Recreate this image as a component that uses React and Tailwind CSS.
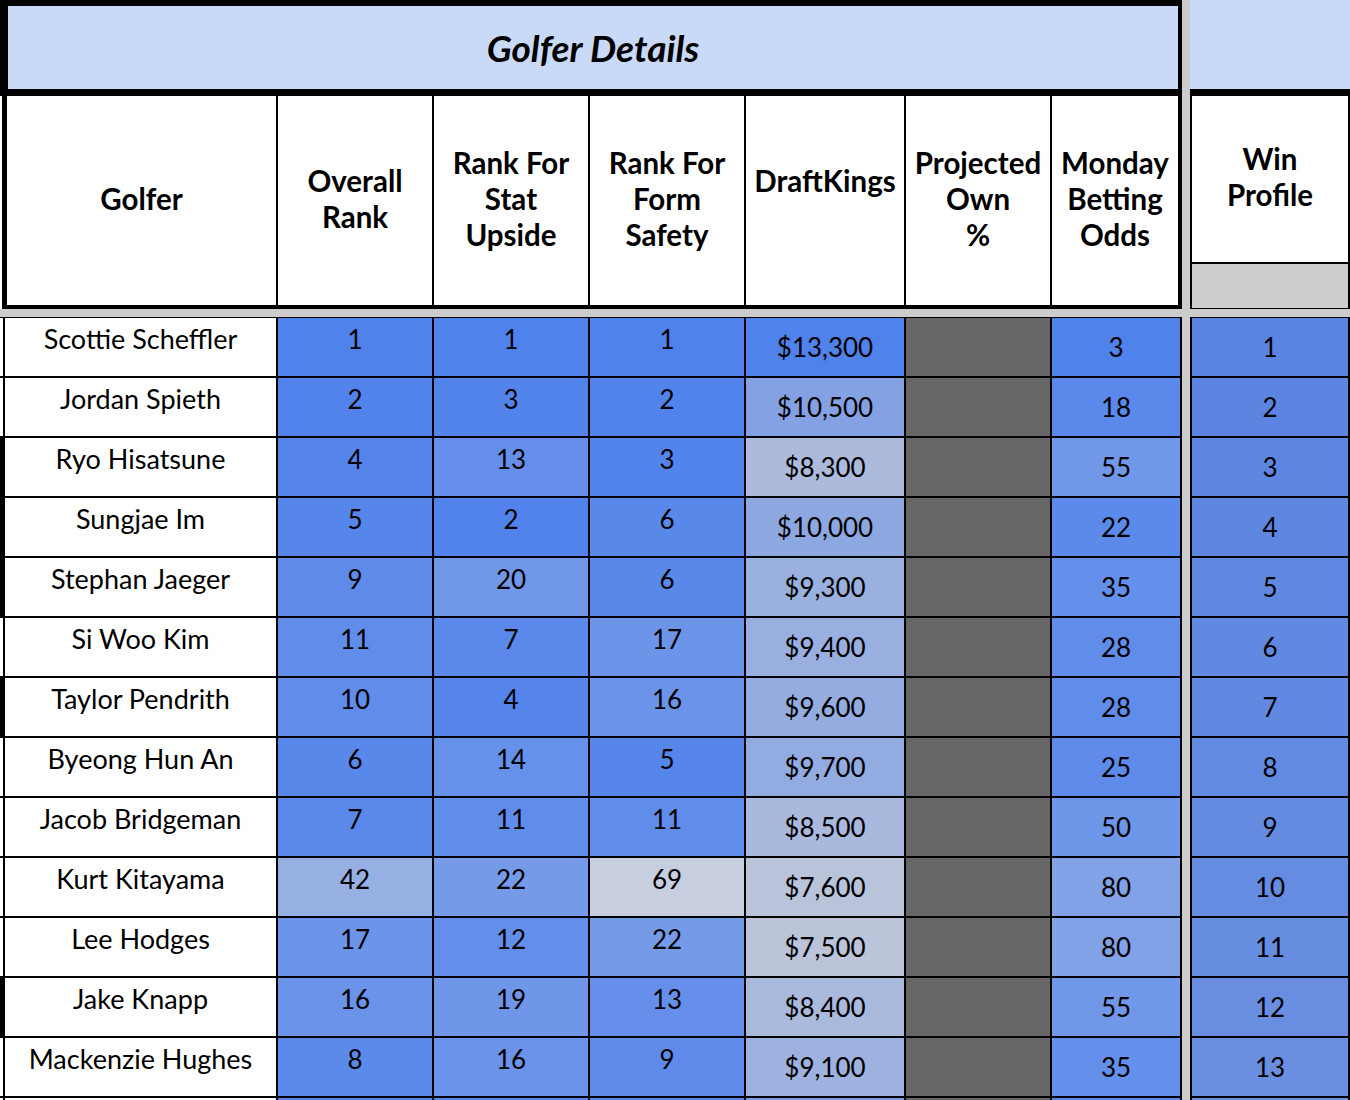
import React from "react";

const rows = [
  ["Scottie Scheffler", 1, 1, 1, 13300, 3, 1, false],
  ["Jordan Spieth", 2, 3, 2, 10500, 18, 2, false],
  ["Ryo Hisatsune", 4, 13, 3, 8300, 55, 3, true],
  ["Sungjae Im", 5, 2, 6, 10000, 22, 4, true],
  ["Stephan Jaeger", 9, 20, 6, 9300, 35, 5, true],
  ["Si Woo Kim", 11, 7, 17, 9400, 28, 6, false],
  ["Taylor Pendrith", 10, 4, 16, 9600, 28, 7, true],
  ["Byeong Hun An", 6, 14, 5, 9700, 25, 8, false],
  ["Jacob Bridgeman", 7, 11, 11, 8500, 50, 9, false],
  ["Kurt Kitayama", 42, 22, 69, 7600, 80, 10, false],
  ["Lee Hodges", 17, 12, 22, 7500, 80, 11, false],
  ["Jake Knapp", 16, 19, 13, 8400, 55, 12, true],
  ["Mackenzie Hughes", 8, 16, 9, 9100, 35, 13, false],
];
const filler = [3, 5, 4, 11000, 20, 14];

function mix(a, b, t) {
  const c = Math.max(0, Math.min(1, t));
  return `rgb(${a.map((x, i) => Math.round(x + (b[i] - x) * c)).join(",")})`;
}
const LO = [80, 130, 236];
const HI = [208, 213, 222];
const rankColor = (v) => mix(LO, HI, (v - 1) / 74);
const dkColor = (v) => mix(LO, [206, 208, 214], (13300 - v) / 6830);
const oddsColor = (v) => mix(LO, HI, (v - 3) / 200);
const winColor = (v) => mix([90, 132, 225], HI, ((v - 1) / 12) * 0.135);
const money = (v) => "$" + v.toLocaleString("en-US");

function TopCell({ children, color, name }) {
  return (
    <div
      className={
        "h-[58px] flex justify-center pt-[5px] leading-[32px] " +
        (name ? "text-[27px]" : "text-[26px]")
      }
      style={{ backgroundColor: color }}
    >
      {children}
    </div>
  );
}
function MidCell({ children, color }) {
  return (
    <div className="h-[58px] flex items-center justify-center leading-[32px] text-[26px]" style={{ backgroundColor: color }}>
      {children}
    </div>
  );
}

function HeadCell({ children }) {
  return (
    <div className="bg-white flex items-center justify-center text-center font-bold text-[29.5px] leading-[36px] pb-[4px]">
      <div>{children}</div>
    </div>
  );
}

export default function App() {
  return (
    <div className="w-[1350px] h-[1100px] overflow-hidden bg-[#cccccc] flex items-start gap-[8px] font-['Lato','Noto_Sans',sans-serif] text-[26px] text-black">
      {/* main panel */}
      <div className="w-[1182px] flex flex-col shrink-0">
        <div className="h-[96px] shrink-0 bg-[#c9daf8] border-t-[6px] border-l-[8px] border-r-[4px] border-b-[7px] border-black flex items-center justify-center">
          <span className="font-bold italic text-[37px] leading-none">Golfer Details</span>
        </div>
        <div className="bg-white shrink-0">
          <div className="ml-[2px] h-[213px] border-l-[5px] border-r-[4px] border-b-[4px] border-black bg-black grid grid-cols-[269px_154px_154px_154px_158px_144px_126px] gap-x-[2px]">
            <HeadCell>Golfer</HeadCell>
            <HeadCell>Overall<br />Rank</HeadCell>
            <HeadCell>Rank For<br />Stat<br />Upside</HeadCell>
            <HeadCell>Rank For<br />Form<br />Safety</HeadCell>
            <HeadCell>DraftKings<br />&nbsp;</HeadCell>
            <HeadCell>Projected<br />Own<br />%</HeadCell>
            <HeadCell>Monday<br />Betting<br />Odds</HeadCell>
          </div>
        </div>
        <div className="mt-[8px] shrink-0 bg-black border-t-[1px] border-r-[2px] border-black grid grid-cols-[3px_271px_154px_154px_154px_158px_144px_128px] gap-[2px]">
          {rows.map((r, i) => (
            <React.Fragment key={i}>
              <div className={r[7] ? "bg-black" : "bg-white"} />
              <TopCell color="#ffffff" name>{r[0]}</TopCell>
              <TopCell color={rankColor(r[1])}>{r[1]}</TopCell>
              <TopCell color={rankColor(r[2])}>{r[2]}</TopCell>
              <TopCell color={rankColor(r[3])}>{r[3]}</TopCell>
              <MidCell color={dkColor(r[4])}>{money(r[4])}</MidCell>
              <MidCell color="#666666"></MidCell>
              <MidCell color={oddsColor(r[5])}>{r[5]}</MidCell>
            </React.Fragment>
          ))}
          <div className="bg-white" />
          <TopCell color="#ffffff" name></TopCell>
          <TopCell color={rankColor(filler[0])}></TopCell>
          <TopCell color={rankColor(filler[1])}></TopCell>
          <TopCell color={rankColor(filler[2])}></TopCell>
          <MidCell color={dkColor(filler[3])}></MidCell>
          <MidCell color="#666666"></MidCell>
          <MidCell color={oddsColor(filler[4])}></MidCell>
        </div>
      </div>

      {/* right panel */}
      <div className="w-[160px] flex flex-col shrink-0">
        <div className="h-[96px] shrink-0 bg-[#c9daf8] border-b-[7px] border-black" />
        <div className="h-[213px] shrink-0 border-l-[2px] border-r-[2px] border-b-[1px] border-black flex flex-col">
          <div className="h-[166px] shrink-0 bg-white flex items-center justify-center text-center font-bold text-[29.5px] leading-[36px] pb-[4px]">
            <div>Win<br />Profile</div>
          </div>
          <div className="h-[2px] shrink-0 bg-black" />
          <div className="flex-1 bg-[#cccccc]" />
        </div>
        <div className="mt-[8px] shrink-0 bg-black border-t-[1px] border-l-[2px] border-r-[2px] border-black grid grid-cols-1 gap-[2px]">
          {rows.map((r, i) => (
            <MidCell key={i} color={winColor(r[6])}>{r[6]}</MidCell>
          ))}
          <MidCell color={winColor(filler[5])}></MidCell>
        </div>
      </div>
    </div>
  );
}
